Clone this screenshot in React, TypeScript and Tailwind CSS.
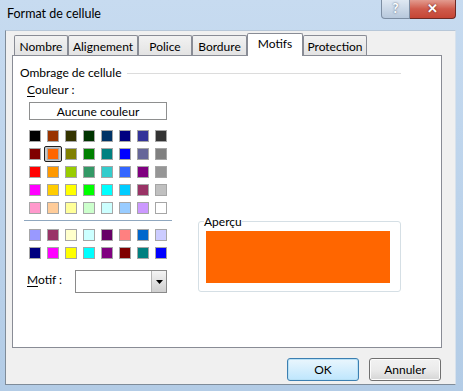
import React from "react";

const palette: string[][] = [
  ["#000000", "#993300", "#333300", "#003300", "#003366", "#000080", "#333399", "#333333"],
  ["#800000", "#FF6600", "#808000", "#008000", "#008080", "#0000FF", "#666699", "#808080"],
  ["#FF0000", "#FF9900", "#99CC00", "#339966", "#33CCCC", "#3366FF", "#800080", "#969696"],
  ["#FF00FF", "#FFCC00", "#FFFF00", "#00FF00", "#00FFFF", "#00CCFF", "#993366", "#C0C0C0"],
  ["#FF99CC", "#FFCC99", "#FFFF99", "#CCFFCC", "#CCFFFF", "#99CCFF", "#CC99FF", "#FFFFFF"],
];
const extra: string[][] = [
  ["#9999FF", "#993366", "#FFFFCC", "#CCFFFF", "#660066", "#FF8080", "#0066CC", "#CCCCFF"],
  ["#000080", "#FF00FF", "#FFFF00", "#00FFFF", "#800080", "#800000", "#008080", "#0000FF"],
];

function Swatch({ color, selected }: { color: string; selected?: boolean }) {
  return (
    <div className="relative w-[12px] h-[12px]">
      {selected && (
        <div className="absolute -left-[3px] -top-[2px] w-[18px] h-[16px] rounded-[2px] border border-[#1e1e1e] bg-[#c8c8c8]" />
      )}
      <div
        className="relative w-[12px] h-[12px] border border-[#a6a6a6]"
        style={{ backgroundColor: color }}
      />
    </div>
  );
}

function Grid({ rows }: { rows: string[][] }) {
  return (
    <div className="grid grid-cols-[repeat(8,12px)] gap-x-[6px] gap-y-[6px]">
      {rows.map((r, i) =>
        r.map((c, j) => (
          <Swatch key={`${i}-${j}`} color={c} selected={rows === palette && i === 1 && j === 1} />
        ))
      )}
    </div>
  );
}

const tabs = [
  { label: "Nombre", w: "w-[54px]" },
  { label: "Alignement", w: "w-[70px]" },
  { label: "Police", w: "w-[54px]" },
  { label: "Bordure", w: "w-[55px]" },
  { label: "Motifs", w: "w-[56px]", active: true },
  { label: "Protection", w: "w-[64px]" },
];

export default function App() {
  return (
    <div
      className="w-[463px] h-[391px] flex flex-col bg-gradient-to-b from-[#c7dbf0] via-[#bcd3eb] to-[#b3cce6] text-[12px] text-black overflow-hidden"
      style={{ fontFamily: "'Lato', 'Liberation Sans', sans-serif" }}
    >
      {/* Title bar */}
      <div className="h-[30px] flex items-start shrink-0">
        <div className="pl-[7px] pt-[6px] text-[12.5px] leading-[16px] text-black">Format de cellule</div>
        <div className="flex-1" />
        <div className="flex mr-[7px]">
          <div className="w-[29px] h-[19px] rounded-bl-[4px] border border-t-0 border-[#7d8ea3] bg-gradient-to-b from-[#dfe8f2] to-[#b7c8dc] flex items-center justify-center text-[13px] font-bold text-white [text-shadow:0_0_2px_#44546a]">
            ?
          </div>
          <div className="w-[46px] h-[19px] rounded-br-[4px] border border-l-0 border-t-0 border-[#6d2a24] bg-gradient-to-b from-[#e29b8f] via-[#cf5a4b] to-[#c54535] flex items-center justify-center text-[13px] font-bold text-white [text-shadow:0_0_2px_#5a1a12]">
            ✕
          </div>
        </div>
      </div>

      {/* Client area */}
      <div className="ml-[5px] mr-[7px] h-[355px] border border-[#7f8c99] border-t-[#b7c7d8] border-r-[#d8e2ec] bg-[#f0f0f0] flex flex-col">
        {/* Tabs */}
        <div className="flex items-end ml-[8px] mt-[2px] h-[23px] relative z-10 -mb-px">
          {tabs.map((t) =>
            t.active ? (
              <div
                key={t.label}
                className={`${t.w} h-[23px] bg-white border border-b-0 border-[#898c95] rounded-t-[2px] flex items-center justify-center leading-[15px] pb-[3px]`}
              >
                {t.label}
              </div>
            ) : (
              <div
                key={t.label}
                className={`${t.w} h-[20px] mb-px bg-gradient-to-b from-[#f2f2f2] to-[#e3e3e3] border border-b-0 border-[#898c95] rounded-t-[2px] flex items-center justify-center leading-[15px] pt-[1px]`}
              >
                {t.label}
              </div>
            )
          )}
        </div>

        {/* Panel */}
        <div className="ml-[6px] w-[430px] h-[293px] bg-white border border-[#898c95] flex flex-col">
          <div className="flex items-center mt-[9px] h-[15px]">
            <span className="ml-[7px] leading-[15px]">Ombrage de cellule</span>
            <div className="flex-1 h-px bg-[#dcdcdc] ml-[6px] mr-[40px] mt-[2px]" />
          </div>

          <div className="flex">
            {/* Left column */}
            <div className="ml-[11px] w-[148px] flex flex-col mt-[2px]">
              <div className="ml-[3px] leading-[15px] h-[15px]">
                <span className="underline underline-offset-2">C</span>ouleur :
              </div>
              <div className="ml-[5px] mt-[5px] w-[138px] h-[18px] border border-[#8e8f8f] flex items-center justify-center leading-[15px]">
                Aucune couleur
              </div>
              <div className="ml-[5px] mt-[10px]">
                <Grid rows={palette} />
              </div>
              <div className="mt-[6px] w-[148px] h-px bg-[#8fa7bf]" />
              <div className="h-px bg-white" />
              <div className="ml-[5px] mt-[7px]">
                <Grid rows={extra} />
              </div>
              <div className="flex items-center mt-[11px]">
                <div className="ml-[3px] w-[48px] leading-[15px] pb-[4px]">
                  <span className="underline underline-offset-2">M</span>otif :
                </div>
                <div className="w-[92px] h-[23px] border border-[#8a8a8a] bg-white flex justify-end">
                  <div className="w-[15px] h-full border-l border-[#b5b5b5] bg-gradient-to-b from-[#f4f4f4] to-[#cfcfcf] flex items-center justify-center">
                    <svg width="7" height="4" viewBox="0 0 7 4">
                      <path d="M0 0 H7 L3.5 4 Z" fill="#000" />
                    </svg>
                  </div>
                </div>
              </div>
            </div>

            {/* Right column */}
            <div className="ml-[26px] mt-[134px]">
              <fieldset className="w-[203px] h-[78px] border border-[#d5dfe5] rounded-[3px]">
                <legend className="ml-[5px] leading-[15px] px-0">Aperçu</legend>
                <div className="ml-[7px] mt-[2px] w-[184px] h-[52px] bg-[#ff6600]" />
              </fieldset>
            </div>
          </div>
        </div>

        {/* Buttons */}
        <div className="flex justify-end gap-[10px] mr-[14px] mt-[10px]">
          <div className="w-[72px] h-[23px] rounded-[3px] border border-[#3c7fb1] bg-gradient-to-b from-[#eaf6fd] to-[#bee6fd] shadow-[inset_0_0_0_1px_#b8e0f5] flex items-center justify-center leading-[15px]">
            OK
          </div>
          <div className="w-[72px] h-[23px] rounded-[3px] border border-[#707070] bg-gradient-to-b from-[#f2f2f2] via-[#ebebeb] to-[#d5d5d5] shadow-[inset_0_0_0_1px_#fcfcfc] flex items-center justify-center leading-[15px]">
            Annuler
          </div>
        </div>
      </div>
    </div>
  );
}
